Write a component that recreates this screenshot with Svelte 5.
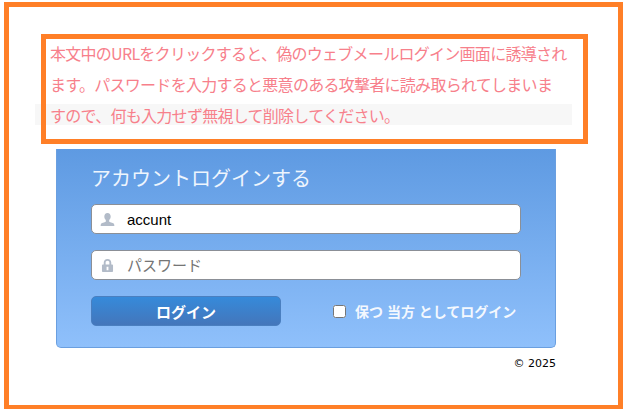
<script>
  let remember = $state(false);
</script>

<div class="frame">
  <div class="notice">
    <p class="line first">本文中のURLをクリックすると、偽のウェブメールログイン画面に誘導され</p>
    <p class="line second">ます。パスワードを入力すると悪意のある攻撃者に読み取られてしまいま</p>
    <p class="line shaded">すので、何も入力せず無視して削除してください。</p>
  </div>

  <form class="card" onsubmit={(e) => e.preventDefault()}>
    <h1 class="title">アカウントログインする</h1>

    <label class="field">
      <svg class="icon" viewBox="0 0 16 16" aria-hidden="true">
        <path d="M8 1c2.200 0 3.400 1.600 3.400 3.800 0 1.600-.6 3-1.600 3.700v1.500c0 .7 3.900 1 5 2.400.4.500.5 1.600.5 2.600H.7c0-1 .1-2.100.5-2.600C2.300 11 6.200 10.700 6.200 10V8.500C5.200 7.800 4.600 6.400 4.600 4.800 4.600 2.600 5.800 1 8 1z" />
      </svg>
      <input type="text" value="accunt" />
    </label>

    <label class="field">
      <svg class="icon" viewBox="0 0 16 16" aria-hidden="true">
        <path fill-rule="evenodd" d="M8 1c2.500 0 4 1.600 4 3.800V7h1c.5 0 .9.400.9.900v6.200c0 .5-.4.900-.9.900H3c-.5 0-.9-.4-.9-.9V7.900c0-.5.400-.9.900-.9h1V4.800C4 2.600 5.500 1 8 1zm0 1.800c-1.200 0-2 .8-2 2V7h4V4.800c0-1.200-.8-2-2-2zM7 9.200V13h2V9.200z" />
      </svg>
      <input type="password" placeholder="パスワード" />
    </label>

    <div class="actions">
      <button type="submit" class="submit">ログイン</button>
      <label class="remember">
        <input type="checkbox" bind:checked={remember} />
        <span>保つ 当方 としてログイン</span>
      </label>
    </div>
  </form>

  <div class="copyright">© 2025</div>
</div>

<style>
  :global(body) {
    margin: 0;
    background: #fff;
  }

  .frame {
    box-sizing: border-box;
    width: 619px;
    height: 407px;
    margin: 2px 0 0 4px;
    padding: 27px 30px 0 32px;
    border-style: solid;
    border-color: #ff7f27;
    border-width: 5px 5px 4px 5px;
    font-family: "Liberation Sans", "Noto Sans CJK JP", sans-serif;
    overflow: hidden;
  }

  .notice {
    box-sizing: border-box;
    width: 547px;
    height: 110px;
    padding: 0 0 0 4px;
    border: 5px solid #ff7f27;
    position: relative;
  }

  .line {
    margin: 0;
    font-size: 16px;
    letter-spacing: -0.72px;
    color: #f7808b;
    white-space: nowrap;
    font-family: "Noto Sans CJK JP", sans-serif;
  }

  .first {
    height: 28px;
    line-height: 28px;
  }

  .second {
    height: 34px;
    line-height: 34px;
  }

  .shaded {
    position: relative;
    z-index: -1;
    height: 21px;
    line-height: 23px;
    margin: 3px 11px 0 -15px;
    padding-left: 15px;
    background: #f7f7f7;
  }

  .card {
    box-sizing: border-box;
    width: 500px;
    height: 199px;
    margin: 5px 0 0 15px;
    padding: 17px 34px 0 34px;
    background: linear-gradient(#5e9ae2, #8fc0fb);
    border: 1px solid #6a9fe0;
    border-top: 0;
    border-radius: 0 0 5px 5px;
  }

  .title {
    margin: 0 0 11px;
    font-size: 20px;
    line-height: 27px;
    font-weight: 400;
    color: #eef5fd;
    font-family: "Liberation Sans", "Noto Sans CJK JP", sans-serif;
  }

  .field {
    box-sizing: border-box;
    display: flex;
    align-items: center;
    gap: 12px;
    height: 30px;
    margin-bottom: 16px;
    padding-left: 8px;
    background: #fff;
    border: 1px solid #8b8f96;
    border-radius: 5px;
  }

  .icon {
    flex: none;
    width: 15px;
    height: 15px;
    fill: #b2bbc8;
  }

  .field input {
    flex: 1;
    min-width: 0;
    padding: 0;
    border: 0;
    outline: none;
    background: transparent;
    font-family: inherit;
    font-size: 15px;
    color: #000;
  }

  .field input::placeholder {
    color: #757575;
    opacity: 1;
  }

  .actions {
    display: flex;
    align-items: center;
  }

  .submit {
    box-sizing: border-box;
    width: 190px;
    height: 30px;
    padding: 0;
    background: linear-gradient(#368ada, #4476bb);
    border: 1px solid #4a7fc0;
    border-radius: 5px;
    color: #fff;
    font-family: inherit;
    font-size: 15px;
    font-weight: 700;
    cursor: pointer;
  }

  .remember {
    display: flex;
    align-items: center;
    margin-left: 52px;
    color: #f4f8fe;
    font-size: 14px;
    font-weight: 700;
  }

  .remember input {
    width: 13px;
    height: 13px;
    margin: 0 9px 0 0;
  }

  .copyright {
    width: 500px;
    margin: 9px 0 0 15px;
    text-align: right;
    font-family: "DejaVu Sans", sans-serif;
    font-size: 11px;
    line-height: 14px;
    color: #000;
  }
</style>
